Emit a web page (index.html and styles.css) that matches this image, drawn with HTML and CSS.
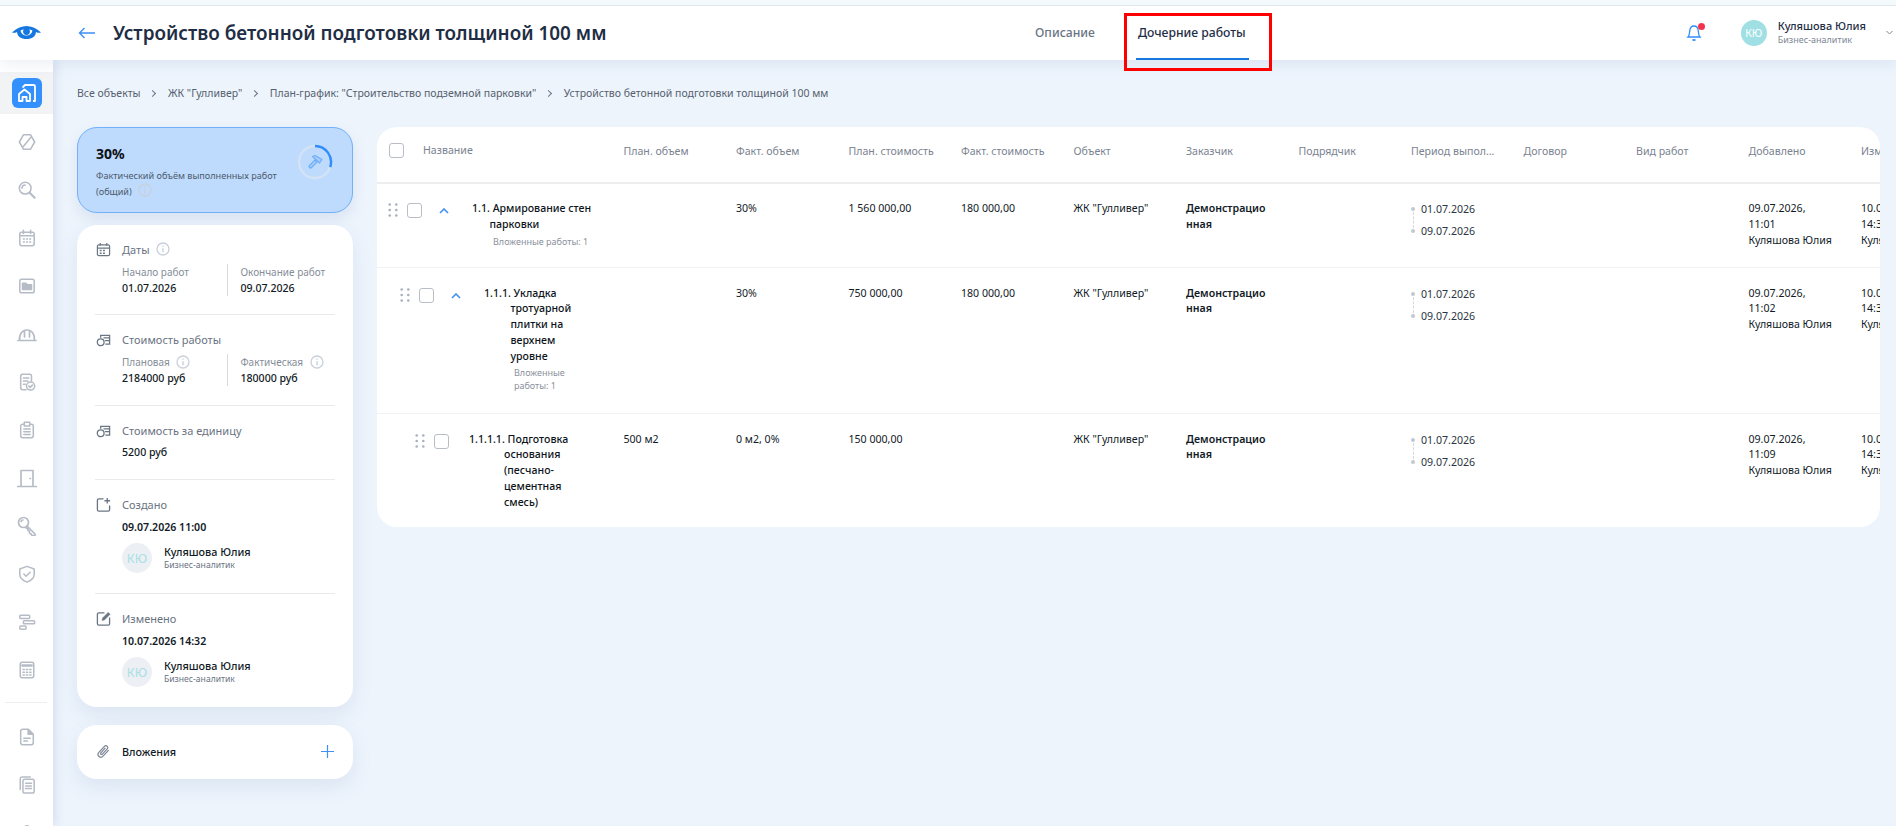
FILE: index.html
```html
<!DOCTYPE html>
<html>
    <head>
        <meta charset="utf-8" />
        <title>Устройство бетонной подготовки толщиной 100 мм</title>
        <link rel="stylesheet" href="styles.css">
    </head>
    <body>
        <svg class="sprite" width="0" height="0">
            <symbol id="i_info" viewBox="0 0 14 14"><circle cx="7" cy="7" r="6" fill="none" stroke="currentColor" stroke-width="1.3"/><path d="M7 6.2v4M7 3.6v1.2" fill="none" stroke="currentColor" stroke-width="1.4"/></symbol>
            <symbol id="i_cost" viewBox="0 0 16 16" fill="none" stroke="currentColor" stroke-width="1.4"><circle cx="5" cy="11" r="3.6"/><path d="M5 6V3.5h9.5V13H10M8 6.2h6.5M9.5 9.2h5" /></symbol>
        </svg>

        <header class="top_bar">
            <div class="logo_cell">
                <svg width="29" height="14" viewBox="0 0 29 14"><path fill="#1677e0" d="M0 6.5C5 2 10 0 14.5 0S24 2 29 6.5c-2 .6-3.5.2-5-.6-.3 4.300-4 7.100-9.500 7.100S5.300 10.200 5 5.900c-1.500.8-3 1.200-5 .6z"/><path fill="#fff" d="M8.500 4.600c3-1.600 8.500-1.800 12 0-.8 3.500-3 5-6 5s-5.300-1.500-6-5z"/><circle cx="14.500" cy="5.500" r="3.400" fill="#1677e0"/></svg>
            </div>
            <svg class="back_icon" width="18" height="12" viewBox="0 0 18 12" fill="none" stroke="#3f8ff5" stroke-width="1.400"><path d="M17 6H1.500M6.500 1 1.500 6l5 5"/></svg>
            <h1 class="page_title">Устройство бетонной подготовки толщиной 100 мм</h1>
            <nav class="tabs">
                <a class="tab">Описание</a>
                <a class="tab tab_active">Дочерние работы</a>
                <div class="red_mark"></div>
            </nav>
            <div class="bell">
                <svg width="16" height="19" viewBox="0 0 16 19" fill="none" stroke="#2f8dfb" stroke-width="1.300"><path d="M2 14c1.500-1.500 1.500-3.500 1.700-6C4 4.500 6 3 8 3s4 1.500 4.300 5c.2 2.500.2 4.500 1.700 6z"/><path d="M6.500 17h3" stroke-width="1.800"/></svg>
                <span class="bell_dot"></span>
            </div>
            <div class="user_box">
                <div class="user_avatar">КЮ</div>
                <div>
                    <div class="user_name">Куляшова Юлия</div>
                    <div class="user_role">Бизнес-аналитик</div>
                </div>
            </div>
            <svg class="user_arrow" width="7" height="5" viewBox="0 0 7 5" fill="none" stroke="#7d8794" stroke-width="1"><path d="M.5 1 3.500 4l3-3"/></svg>
        </header>

        <div class="layout">
            <aside class="sidebar">
                <div class="side_home">
                    <div class="side_home_btn">
                        <svg width="22" height="22" viewBox="0 0 22 22" fill="none" stroke="#fff" stroke-width="1.800" stroke-linejoin="round"><path d="M3 19v-7l5.500-4.500L14 12v7h-3.500v-4h-4v4z"/><path d="M6.500 5.500 9 3h8.500a1.500 1.500 0 0 1 1.500 1.500V19h-2"/></svg>
                    </div>
                </div>
                <div class="side_item"><svg viewBox="0 0 20 20"><path d="M6 2h8l4.500 8-4.500 8H6l-4.500-8zM5 16 15 4"/></svg></div>
                <div class="side_item"><svg viewBox="0 0 20 20"><circle cx="8" cy="8" r="6.500"/><path d="M4.500 8A3.500 3.500 0 0 1 8 4.500"/><path d="m13 13 5.500 5.500" stroke-width="2.400"/></svg></div>
                <div class="side_item"><svg viewBox="0 0 20 20"><rect x="2" y="3.500" width="16" height="15" rx="2"/><path d="M6 1.500v3.500M14 1.500v3.500M2 7.500h16M6 11h1M9.500 11h1M13 11h1M6 14.500h1M9.500 14.500h1M13 14.500h1"/></svg></div>
                <div class="side_item"><svg viewBox="0 0 20 20"><rect x="2" y="2.500" width="16" height="15" rx="2"/><path d="M5 9V7h4l1 1.500h5V14H5z" fill="#b6bcc6"/></svg></div>
                <div class="side_item side_wide"><svg viewBox="0 0 20 20"><path d="M1 16.500h18M2.500 16.500c-.5-6.500 3-10.500 7.500-10.500s8 4 7.500 10.500M7.500 6.500V13M12.500 6.500V13"/></svg></div>
                <div class="side_item"><svg viewBox="0 0 20 20"><path d="M9 18.500H5a2 2 0 0 1-2-2v-13a2 2 0 0 1 2-2h8a2 2 0 0 1 2 2V9M6 5.500h6M6 9h5M6 12.500h2"/><circle cx="14" cy="14.500" r="4.500"/><path d="m12 14.500 1.500 1.500 2.500-2.500"/></svg></div>
                <div class="side_item"><svg viewBox="0 0 20 20"><path d="M6.500 3.500H5a2 2 0 0 0-2 2v11a2 2 0 0 0 2 2h10a2 2 0 0 0 2-2v-11a2 2 0 0 0-2-2h-1.500M7 1.500h6v4H7zM6.500 9h7M6.500 12h7M6.500 15h7"/></svg></div>
                <div class="side_item side_wide"><svg viewBox="0 0 20 20"><path d="M.5 18.500h19M4 18.500V2.500h12v16M13 10.500h.5"/></svg></div>
                <div class="side_item side_wide"><svg viewBox="0 0 20 20"><circle cx="6.500" cy="6.500" r="5"/><path d="M4 5.500a2 2 0 0 1 2-1.500M10 10l8 8v1.500h-3L14 18l-1.500-1V15l-1.500-.5v-1.500L8.500 11.500"/></svg></div>
                <div class="side_item"><svg viewBox="0 0 20 20"><path d="M10 1.500 18 4.500v6c0 4-3 6.500-8 8.500-5-2-8-4.500-8-8.500v-6zM6.500 10l2.500 2.500 4.500-4.500"/></svg></div>
                <div class="side_item"><svg viewBox="0 0 20 20"><rect x="2" y="2.500" width="11" height="3.500" rx="1"/><rect x="6" y="8.500" width="12.500" height="3.500" rx="1"/><rect x="2" y="14.500" width="7" height="3.500" rx="1"/></svg></div>
                <div class="side_item"><svg viewBox="0 0 20 20"><rect x="2.500" y="1.500" width="15" height="17" rx="2"/><path d="M5 5h10" stroke-width="3"/><path d="M5.500 9.500h1.500M9.300 9.500h1.500M13 9.500h1.500M5.500 12.500h1.500M9.300 12.500h1.500M13 12.500h1.500M5.500 15.500h1.500M9.300 15.500h1.500M13 15.500h1.500"/></svg></div>
                <div class="side_line"></div>
                <div class="side_item"><svg viewBox="0 0 20 20"><path d="M11.500 1.500H5a2 2 0 0 0-2 2v13a2 2 0 0 0 2 2h10a2 2 0 0 0 2-2V7zM11.500 1.500V7H17" /><path d="M11.500 2 16.500 7h-5z" fill="#b6bcc6"/><path d="M6.500 11.500h7M6.500 14.500h4"/></svg></div>
                <div class="side_item"><svg viewBox="0 0 20 20"><rect x="5.500" y="3.500" width="12.500" height="15.500" rx="2"/><path d="M2.500 15V3a2 2 0 0 1 2-2h9M8.500 8h6.500M8.500 11h6.500M8.500 14h6.500"/></svg></div>
                <div class="side_item"><svg viewBox="0 0 20 20"><circle cx="10" cy="6" r="4"/><path d="M3 18c0-4 3-6 7-6s7 2 7 6"/></svg></div>
            </aside>

            <main class="content">
                <div class="crumbs">
                    <span>Все объекты</span><i class="crumb_arrow"></i>
                    <span>ЖК "Гулливер"</span><i class="crumb_arrow"></i>
                    <span>План-график: "Строительство подземной парковки"</span><i class="crumb_arrow"></i>
                    <span>Устройство бетонной подготовки толщиной 100 мм</span>
                </div>

                <div class="columns">
                    <div class="left_col">
                        <div class="kpi_card">
                            <div class="kpi_text">
                                <div class="kpi_num">30%</div>
                                <div class="kpi_label">Фактический объём выполненных работ<br>(общий) <svg class="info_icon kpi_info"><use href="#i_info"/></svg></div>
                            </div>
                            <svg class="kpi_ring" width="36" height="36" viewBox="0 0 36 36" fill="none">
                                <circle cx="18" cy="18" r="16" stroke="#d3e2f5" stroke-width="2.400"/>
                                <path d="M18 2a16 16 0 0 1 15.200 21" stroke="#2f8dfb" stroke-width="2.400"/>
                                <path d="m12.500 21.500 5.500-5.500 2 2-5.500 5.500a1.400 1.400 0 0 1-2-2z" fill="#a9cdf9" stroke="#6eaef8" stroke-width="1.200" stroke-linejoin="round"/>
                                <path d="M15.500 12.500 18 11.500l7 4-2.500 3.500z" fill="#a9cdf9" stroke="#6eaef8" stroke-width="1.200" stroke-linejoin="round"/>
                            </svg>
                        </div>

                        <div class="info_card">
                            <section class="info_block block_dates">
                                <div class="block_head">
                                    <svg class="block_icon" viewBox="0 0 16 16" fill="none" stroke="#6b7685" stroke-width="1.300"><rect x="1.500" y="3" width="13" height="11.500" rx="1.500"/><path d="M4.500 1v3M11.500 1v3M1.500 6.500h13" /><path d="M4 9h2M7.500 9h2M7.500 12h2M4 12h2" stroke-width="1.600"/></svg>
                                    <span class="block_title">Даты</span>
                                    <svg class="info_icon"><use href="#i_info"/></svg>
                                </div>
                                <div class="pair">
                                    <div class="pair_item">
                                        <div class="pair_label">Начало работ</div>
                                        <div class="pair_value">01.07.2026</div>
                                    </div>
                                    <div class="pair_item">
                                        <div class="pair_label">Окончание работ</div>
                                        <div class="pair_value">09.07.2026</div>
                                    </div>
                                </div>
                            </section>
                            <section class="info_block">
                                <div class="block_head">
                                    <svg class="block_icon icon_gray"><use href="#i_cost"/></svg>
                                    <span class="block_title">Стоимость работы</span>
                                </div>
                                <div class="pair">
                                    <div class="pair_item">
                                        <div class="pair_label">Плановая <svg class="info_icon"><use href="#i_info"/></svg></div>
                                        <div class="pair_value">2184000 руб</div>
                                    </div>
                                    <div class="pair_item">
                                        <div class="pair_label">Фактическая <svg class="info_icon"><use href="#i_info"/></svg></div>
                                        <div class="pair_value">180000 руб</div>
                                    </div>
                                </div>
                            </section>
                            <section class="info_block">
                                <div class="block_head">
                                    <svg class="block_icon icon_gray"><use href="#i_cost"/></svg>
                                    <span class="block_title">Стоимость за единицу</span>
                                </div>
                                <div class="block_value">5200 руб</div>
                            </section>
                            <section class="info_block block_person">
                                <div class="block_head">
                                    <svg class="block_icon" viewBox="0 0 16 16" fill="none" stroke="#6b7685" stroke-width="1.400"><path d="M8 2H3a1.500 1.500 0 0 0-1.500 1.500v10A1.500 1.500 0 0 0 3 15h10a1.500 1.500 0 0 0 1.500-1.500V9M12 1v6M9 4h6"/></svg>
                                    <span class="block_title">Создано</span>
                                </div>
                                <div class="block_value block_strong">09.07.2026 11:00</div>
                                <div class="person">
                                    <div class="person_avatar">КЮ</div>
                                    <div>
                                        <div class="person_name">Куляшова Юлия</div>
                                        <div class="person_role">Бизнес-аналитик</div>
                                    </div>
                                </div>
                            </section>
                            <section class="info_block block_person last_block">
                                <div class="block_head">
                                    <svg class="block_icon" viewBox="0 0 16 16" fill="none" stroke="#6b7685" stroke-width="1.400"><path d="M9 2H3a1.500 1.500 0 0 0-1.500 1.500v10A1.500 1.500 0 0 0 3 15h10a1.500 1.500 0 0 0 1.500-1.500V7"/><path d="m6.500 10 .5-2.500L13 1.500l2 2-6 6z" fill="#6b7685" stroke-width=".6"/></svg>
                                    <span class="block_title">Изменено</span>
                                </div>
                                <div class="block_value block_strong">10.07.2026 14:32</div>
                                <div class="person">
                                    <div class="person_avatar">КЮ</div>
                                    <div>
                                        <div class="person_name">Куляшова Юлия</div>
                                        <div class="person_role">Бизнес-аналитик</div>
                                    </div>
                                </div>
                            </section>
                        </div>

                        <div class="attach_card">
                            <svg class="block_icon" viewBox="0 0 16 16" fill="none" stroke="#7d8794" stroke-width="1.300"><path d="M13.500 6.500 7.500 13a3 3 0 0 1-4.500-4l6-6.500a2 2 0 0 1 3 2.700L6.500 11a1 1 0 0 1-1.500-1.300l5-5.500"/></svg>
                            <span class="attach_title">Вложения</span>
                            <svg class="attach_plus" width="13" height="13" viewBox="0 0 13 13" stroke="#3f8ff5" stroke-width="1.200"><path d="M6.500 0v13M0 6.500h13"/></svg>
                        </div>
                    </div>

                    <div class="table_card">
                        <table class="works">
                            <colgroup>
                                <col class="col_name">
                                <col class="col_std"><col class="col_std"><col class="col_std"><col class="col_std">
                                <col class="col_std"><col class="col_std"><col class="col_std"><col class="col_std">
                                <col class="col_std"><col class="col_std"><col class="col_std"><col class="col_std">
                            </colgroup>
                            <thead>
                                <tr>
                                    <th class="head_name"><input type="checkbox" class="check"><span>Название</span></th>
                                    <th>План. объем</th>
                                    <th>Факт. объем</th>
                                    <th>План. стоимость</th>
                                    <th>Факт. стоимость</th>
                                    <th>Объект</th>
                                    <th>Заказчик</th>
                                    <th>Подрядчик</th>
                                    <th><span class="head_cut">Период выполнения</span></th>
                                    <th>Договор</th>
                                    <th>Вид работ</th>
                                    <th>Добавлено</th>
                                    <th>Изменено</th>
                                </tr>
                            </thead>
                            <tbody>
                                <tr class="row_a">
                                    <td>
                                        <div class="name_cell level_1">
                                            <svg class="drag" viewBox="0 0 10 14"><circle cx="1.700" cy="1.500" r="1.300"/><circle cx="8.300" cy="1.500" r="1.300"/><circle cx="1.700" cy="7" r="1.300"/><circle cx="8.300" cy="7" r="1.300"/><circle cx="1.700" cy="12.500" r="1.300"/><circle cx="8.300" cy="12.500" r="1.300"/></svg>
                                            <input type="checkbox" class="check">
                                            <svg class="chevron" viewBox="0 0 10 6" fill="none" stroke="#3f8ff5" stroke-width="1.600"><path d="m1 5 4-4 4 4"/></svg>
                                            <div class="work_title">
                                                <div class="work_name">1.1. Армирование стен парковки</div>
                                                <div class="work_sub">Вложенные работы: 1</div>
                                            </div>
                                        </div>
                                    </td>
                                    <td></td>
                                    <td>30%</td>
                                    <td>1 560 000,00</td>
                                    <td>180 000,00</td>
                                    <td>ЖК "Гулливер"</td>
                                    <td><div class="customer">Демонстрационная</div></td>
                                    <td></td>
                                    <td><div class="period"><div class="period_date">01.07.2026</div><div class="period_date">09.07.2026</div></div></td>
                                    <td></td>
                                    <td></td>
                                    <td>09.07.2026,<br>11:01<br>Куляшова Юлия</td>
                                    <td>10.07.2026,<br>14:32<br>Куляшова Юлия</td>
                                </tr>
                                <tr class="row_b">
                                    <td>
                                        <div class="name_cell level_2">
                                            <svg class="drag" viewBox="0 0 10 14"><circle cx="1.700" cy="1.500" r="1.300"/><circle cx="8.300" cy="1.500" r="1.300"/><circle cx="1.700" cy="7" r="1.300"/><circle cx="8.300" cy="7" r="1.300"/><circle cx="1.700" cy="12.500" r="1.300"/><circle cx="8.300" cy="12.500" r="1.300"/></svg>
                                            <input type="checkbox" class="check">
                                            <svg class="chevron" viewBox="0 0 10 6" fill="none" stroke="#3f8ff5" stroke-width="1.600"><path d="m1 5 4-4 4 4"/></svg>
                                            <div class="work_title">
                                                <div class="work_name">1.1.1. Укладка тротуарной плитки на верхнем уровне</div>
                                                <div class="work_sub">Вложенные работы: 1</div>
                                            </div>
                                        </div>
                                    </td>
                                    <td></td>
                                    <td>30%</td>
                                    <td>750 000,00</td>
                                    <td>180 000,00</td>
                                    <td>ЖК "Гулливер"</td>
                                    <td><div class="customer">Демонстрационная</div></td>
                                    <td></td>
                                    <td><div class="period"><div class="period_date">01.07.2026</div><div class="period_date">09.07.2026</div></div></td>
                                    <td></td>
                                    <td></td>
                                    <td>09.07.2026,<br>11:02<br>Куляшова Юлия</td>
                                    <td>10.07.2026,<br>14:32<br>Куляшова Юлия</td>
                                </tr>
                                <tr class="row_c">
                                    <td>
                                        <div class="name_cell level_3">
                                            <svg class="drag" viewBox="0 0 10 14"><circle cx="1.700" cy="1.500" r="1.300"/><circle cx="8.300" cy="1.500" r="1.300"/><circle cx="1.700" cy="7" r="1.300"/><circle cx="8.300" cy="7" r="1.300"/><circle cx="1.700" cy="12.500" r="1.300"/><circle cx="8.300" cy="12.500" r="1.300"/></svg>
                                            <input type="checkbox" class="check">
                                            <div class="work_title">
                                                <div class="work_name">1.1.1.1. Подготовка основания (песчано-цементная смесь)</div>
                                            </div>
                                        </div>
                                    </td>
                                    <td>500 м2</td>
                                    <td>0 м2, 0%</td>
                                    <td>150 000,00</td>
                                    <td></td>
                                    <td>ЖК "Гулливер"</td>
                                    <td><div class="customer">Демонстрационная</div></td>
                                    <td></td>
                                    <td><div class="period"><div class="period_date">01.07.2026</div><div class="period_date">09.07.2026</div></div></td>
                                    <td></td>
                                    <td></td>
                                    <td>09.07.2026,<br>11:09<br>Куляшова Юлия</td>
                                    <td>10.07.2026,<br>14:32<br>Куляшова Юлия</td>
                                </tr>
                            </tbody>
                        </table>
                    </div>
                </div>
            </main>
        </div>
    </body>
</html>
```

FILE: styles.css
```css
* {
	padding: 0;
	margin: 0;
	box-sizing: border-box;
}
html, body {
	height: 100%;
	overflow: hidden;
}
body {
	font-family: "Noto Sans", "Open Sans", sans-serif;
	background: #edf4fc;
	color: #111a26;
	font-size: 10.6px;
}
.sprite {
	position: absolute;
}

/* top bar */
.top_bar {
	height: 60px;
	background: #fff;
	border-top: 5px solid #f4f9fc;
	display: flex;
	align-items: center;
	position: relative;
	z-index: 3;
	box-shadow: 0 4px 14px rgba(90,120,170,0.12);
}
.top_bar::before {
	content: '';
	position: absolute;
	left: 0;
	right: 0;
	top: 0;
	height: 1px;
	background: #dfe9ec;
}
.logo_cell {
	width: 53px;
	display: flex;
	justify-content: center;
}
.back_icon {
	margin-left: 25px;
}
.page_title {
	margin-left: 17px;
	width: 600px;
	font-size: 18.9px;
	font-weight: 600;
	color: #1f2e45;
	white-space: nowrap;
}
.tabs {
	margin-left: 322px;
	display: flex;
	height: 54px;
	gap: 43px;
	position: relative;
}
.tab {
	display: flex;
	align-items: center;
	font-size: 12.2px;
	font-weight: 500;
	color: #6a7584;
	height: 54px;
	white-space: nowrap;
}
.tab_active {
	color: #1f2e45;
	position: relative;
}
.tab_active::after {
	content: '';
	position: absolute;
	left: -2px;
	right: -3px;
	bottom: 0;
	height: 2px;
	background: #1677e0;
}
.red_mark {
	position: absolute;
	left: 89px;
	top: 7px;
	width: 148px;
	height: 58px;
	border: 3px solid #f00;
}
.bell {
	margin-left: 440px;
	position: relative;
	height: 19px;
}
.bell_dot {
	position: absolute;
	right: -3px;
	top: 0;
	width: 7px;
	height: 7px;
	border-radius: 50%;
	background: #f5334f;
}
.user_box {
	margin-left: 39px;
	display: flex;
	align-items: center;
	gap: 11px;
	flex-shrink: 0;
}
.user_avatar {
	width: 26px;
	height: 26px;
	border-radius: 50%;
	background: #a0e0e4;
	color: #fff;
	font-size: 10.5px;
	display: flex;
	align-items: center;
	justify-content: center;
}
.user_name {
	font-size: 11px;
	font-weight: 500;
	color: #1f2e45;
	line-height: 15px;
	white-space: nowrap;
}
.user_role {
	font-size: 9px;
	color: #7d8794;
	line-height: 14px;
	white-space: nowrap;
}
.user_arrow {
	margin-left: 20px;
	flex-shrink: 0;
}

.layout {
	display: flex;
	height: 766px;
}

/* sidebar */
.sidebar {
	width: 53px;
	flex-shrink: 0;
	background: #fff;
	padding-top: 12px;
	box-shadow: 2px 0 10px rgba(90,120,170,0.18);
	overflow: hidden;
	position: relative;
	z-index: 2;
}
.side_home {
	height: 42px;
	background: #f2f3f5;
	display: flex;
	align-items: center;
	justify-content: center;
	margin-bottom: 4px;
}
.side_home_btn {
	width: 30px;
	height: 30px;
	border-radius: 6px;
	background: #3390fd;
	display: flex;
	align-items: center;
	justify-content: center;
}
.side_item {
	height: 48px;
	display: flex;
	align-items: center;
	justify-content: center;
}
.side_item svg {
	width: 18px;
	height: 18px;
	fill: none;
	stroke: #b6bcc6;
	stroke-width: 1.700;
	stroke-linecap: round;
	stroke-linejoin: round;
}
.side_wide svg {
	width: 20px;
	height: 20px;
}
.side_line {
	height: 1px;
	background: #eceef1;
	margin: 8px 6px 10px 5px;
}

/* main */
.content {
	flex: 1;
	min-width: 0;
	padding: 24px 16px 0 24px;
}
.crumbs {
	height: 18px;
	display: flex;
	align-items: center;
	color: #555f6e;
	font-size: 10.5px;
	white-space: nowrap;
}
.crumb_arrow {
	width: 5px;
	height: 5px;
	border-top: 1px solid #6a7584;
	border-right: 1px solid #6a7584;
	transform: rotate(45deg);
	margin: 0 13px 0 9.5px;
}
.columns {
	display: flex;
	gap: 24px;
	margin-top: 25px;
	align-items: flex-start;
}
.left_col {
	width: 276px;
	flex-shrink: 0;
}
.info_icon {
	width: 14px;
	height: 14px;
	color: #c9d0da;
	vertical-align: middle;
}

/* progress card */
.kpi_card {
	height: 86px;
	background: #bedbfd;
	border: 1px solid #72b0f9;
	border-radius: 20px;
	padding: 16px 19px 0 18px;
	display: flex;
	justify-content: space-between;
	box-shadow: 0 6px 14px rgba(90,120,170,0.14);
}
.kpi_num {
	font-size: 14px;
	font-weight: 700;
	color: #0c0f14;
	line-height: 20px;
}
.kpi_label {
	font-size: 9.1px;
	line-height: 15.500px;
	color: #4c5a6c;
	margin-top: 4px;
}
.kpi_info {
	margin-left: 4px;
	margin-top: -5px;
}
.kpi_ring {
	flex-shrink: 0;
}

/* details card */
.info_card {
	margin-top: 12px;
	background: #fff;
	border-radius: 20px;
	padding: 0 18px;
	box-shadow: 0 8px 20px rgba(90,120,170,0.12);
}
.info_block {
	padding: 15px 0 19px;
	border-bottom: 1px solid #e8eaed;
}
.block_dates {
	padding-bottom: 18px;
}
.block_person {
	padding-bottom: 20px;
}
.last_block {
	border-bottom: 0;
}
.block_head {
	height: 18px;
	display: flex;
	align-items: center;
}
.block_icon {
	width: 15px;
	height: 15px;
	flex-shrink: 0;
	margin-left: 1px;
}
.icon_gray {
	color: #6b7685;
}
.block_title {
	margin-left: 11px;
	font-size: 11px;
	color: #6a7382;
}
.block_head .info_icon {
	margin-left: 6px;
}
.pair {
	display: flex;
	margin: 6px 0 0 27px;
}
.pair_item {
	width: 108px;
	height: 32px;
}
.pair_item:first-child {
	border-right: 1px solid #d8dce1;
}
.pair_item + .pair_item {
	padding-left: 12px;
}
.pair_label {
	font-size: 10px;
	line-height: 16px;
	color: #858d99;
	white-space: nowrap;
}
.pair_label .info_icon {
	margin-left: 4px;
	margin-top: -2px;
}
.pair_value {
	font-size: 10.6px;
	font-weight: 500;
	line-height: 16px;
	white-space: nowrap;
}
.block_value {
	margin: 5px 0 0 27px;
	font-size: 10.6px;
	font-weight: 500;
	line-height: 16px;
}
.block_strong {
	margin-top: 6px;
	font-weight: 600;
}
.person {
	margin: 8px 0 0 27px;
	display: flex;
	align-items: center;
	gap: 12px;
}
.person_avatar {
	width: 30px;
	height: 30px;
	border-radius: 50%;
	background: #eceff3;
	color: #a8e0e4;
	font-size: 12.5px;
	display: flex;
	align-items: center;
	justify-content: center;
}
.person_name {
	font-size: 10.8px;
	font-weight: 500;
	line-height: 15px;
}
.person_role {
	font-size: 8.600px;
	color: #6a7382;
	line-height: 13px;
}

/* attachments */
.attach_card {
	margin-top: 18px;
	height: 54px;
	background: #fff;
	border-radius: 20px;
	display: flex;
	align-items: center;
	padding: 0 19px 2px 18px;
	box-shadow: 0 8px 20px rgba(90,120,170,0.12);
}
.attach_title {
	margin-left: 11px;
	font-size: 10.8px;
	font-weight: 500;
	flex: 1;
}

/* table */
.table_card {
	width: 1503px;
	height: 400px;
	background: #fff;
	border-radius: 20px;
	overflow: hidden;
	flex-shrink: 0;
}
.works {
	width: 1585.500px;
	table-layout: fixed;
	border-collapse: collapse;
	font-size: 10.6px;
}
.col_name {
	width: 235.500px;
}
.col_std {
	width: 112.500px;
}
.works th {
	height: 56px;
	padding: 0 17px 8px 11px;
	font-weight: 400;
	font-size: 10.6px;
	color: #7a8290;
	text-align: left;
	white-space: nowrap;
	border-bottom: 2px solid #eceef0;
}
.works th.head_name {
	padding-left: 12px;
}
.head_name span {
	margin-left: 19px;
}
.head_cut {
	display: block;
	overflow: hidden;
	text-overflow: ellipsis;
}
.check {
	appearance: none;
	display: inline-block;
	width: 15px;
	height: 15px;
	flex-shrink: 0;
	border: 1px solid #b9bec6;
	border-radius: 3px;
	background: #fff;
	vertical-align: middle;
}
.works td {
	padding: 17px 17px 0 11px;
	vertical-align: top;
	line-height: 15.800px;
	border-bottom: 1px solid #f0f2f4;
}
.works td:first-child {
	padding: 17px 0 0 0;
}
.row_a {
	height: 84px;
}
.row_b {
	height: 146px;
}
.row_c {
	height: 114px;
}
.works .row_b td, .works .row_c td {
	padding-top: 18px;
}
.row_c td {
	border-bottom: 0;
}
.name_cell {
	display: flex;
	align-items: flex-start;
}
.drag {
	width: 10px;
	height: 14px;
	fill: #a8b0bc;
	flex-shrink: 0;
	margin-top: 2px;
}
.name_cell .check {
	margin: 2px 0 0 9px;
}
.chevron {
	width: 10px;
	height: 6px;
	flex-shrink: 0;
	margin: 7px 0 0 17px;
}
.level_1 {
	padding-left: 11px;
}
.level_2 {
	padding-left: 23px;
}
.level_3 {
	padding-left: 38px;
}
.work_title {
	min-width: 0;
	flex-shrink: 0;
}
.work_name {
	font-weight: 500;
	color: #0d1420;
}
.level_1 .work_title {
	padding-left: 40.500px;
	width: 154px;
}
.level_2 .work_title {
	padding-left: 49.500px;
	width: 129px;
}
.level_3 .work_title {
	padding-left: 55px;
	width: 136px;
}
.level_1 .work_name {
	text-indent: -17.500px;
}
.level_2 .work_name {
	text-indent: -26.500px;
}
.level_3 .work_name {
	text-indent: -35px;
}
.work_sub {
	font-size: 9px;
	line-height: 13px;
	color: #8a919c;
	margin: 2px 0 0 3.500px;
}
.customer {
	font-weight: 600;
	word-break: break-all;
	width: 83px;
}
.period {
	position: relative;
	padding-left: 10px;
}
.period::before {
	content: '';
	position: absolute;
	left: 1.500px;
	top: 11px;
	height: 16px;
	border-left: 1px dashed #d5d9df;
}
.period_date {
	position: relative;
	line-height: 16px;
	margin-bottom: 6px;
	color: #2a3442;
}
.period_date::before {
	content: '';
	position: absolute;
	left: -10px;
	top: 6px;
	width: 4px;
	height: 4px;
	border-radius: 50%;
	background: #c3c8d0;
}
```
